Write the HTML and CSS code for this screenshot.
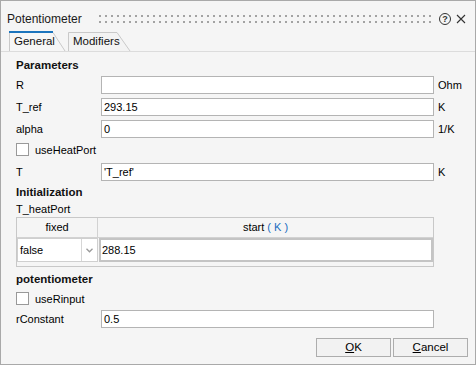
FILE: index.html
```html
<!DOCTYPE html>
<html>
<head>
<meta charset="utf-8">
<link rel="stylesheet" href="styles.css">
</head>
<body>
<div class="window">
  <div class="titlebar">
    <span class="title">Potentiometer</span>
    <span class="grip"></span>
    <span class="help">?</span>
    <svg class="close" width="10" height="10" viewBox="0 0 10 10"><path d="M1 1L9 9M9 1L1 9" stroke="#333" stroke-width="1.1" fill="none"/></svg>
  </div>
  <div class="tabs">
    <div class="tab tab-general">
      <svg class="tab-shape" width="57" height="20" viewBox="0 0 57 20"><path d="M0.5 20V1.5H44L56 20" fill="#f6f6f6" stroke="#c9c9c9"/><rect x="0" y="0" width="44" height="2" fill="#1b74bd"/></svg>
      <span class="tab-label">General</span>
    </div>
    <div class="tab tab-mod">
      <svg class="tab-shape" width="63" height="20" viewBox="0 0 63 20"><path d="M0.5 20V1.5H49L62 20" fill="#f3f3f3" stroke="#c9c9c9"/></svg>
      <span class="tab-label">Modifiers</span>
    </div>
  </div>
  <div class="panel">
    <div class="heading">Parameters</div>
    <div class="row first"><span class="lbl">R</span><div class="field"></div><span class="unit">Ohm</span></div>
    <div class="row"><span class="lbl">T_ref</span><div class="field">293.15</div><span class="unit">K</span></div>
    <div class="row"><span class="lbl">alpha</span><div class="field">0</div><span class="unit">1/K</span></div>
    <div class="check-row"><span class="box"></span><span>useHeatPort</span></div>
    <div class="row after-check"><span class="lbl">T</span><div class="field">'T_ref'</div><span class="unit">K</span></div>
    <div class="heading h2">Initialization</div>
    <div class="sub">T_heatPort</div>
    <div class="table">
      <div class="thead">
        <div class="th th-fixed">fixed</div>
        <div class="th th-start">start <span class="blue">( K )</span></div>
      </div>
      <div class="trow">
        <div class="combo"><span class="combo-text">false</span><span class="combo-arrow"><svg width="7" height="5" viewBox="0 0 7 5"><path d="M0.5 0.8L3.5 3.8L6.5 0.8" stroke="#9a9a9a" stroke-width="1.3" fill="none"/></svg></span></div>
        <div class="cell-input">288.15</div>
      </div>
      <div class="tfoot"></div>
    </div>
    <div class="heading h3">potentiometer</div>
    <div class="check-row c2"><span class="box"></span><span>useRinput</span></div>
    <div class="row r-last"><span class="lbl">rConstant</span><div class="field">0.5</div></div>
  </div>
  <div class="buttons">
    <div class="btn"><u>O</u>K</div>
    <div class="btn"><u>C</u>ancel</div>
  </div>
</div>
</body>
</html>
```
FILE: styles.css
```css
* { box-sizing: border-box; margin: 0; padding: 0; }
html, body { width: 476px; height: 365px; overflow: hidden; }
body {
  background: #f5f5f5;
  font-family: "Liberation Sans", Arial, sans-serif;
  font-size: 11px;
  color: #000;
}
.window {
  width: 476px;
  height: 365px;
  border: 1px solid #a9a9a9;
  background: #f5f5f5;
  display: flex;
  flex-direction: column;
}
.titlebar {
  height: 30px;
  padding: 5px 9px 0 6px;
  display: flex;
  align-items: center;
}
.title { font-size: 12px; color: #1a1a1a; }
.grip {
  flex: 1;
  height: 8px;
  margin: 0 8px 0 17px;
  background-image: conic-gradient(at 2px 2px, transparent 75%, #a3a3a3 0);
  background-size: 6px 6px;
}
.help {
  width: 12px;
  height: 12px;
  border: 1.2px solid #333;
  border-radius: 50%;
  font-size: 9px;
  font-weight: bold;
  line-height: 10px;
  text-align: center;
  color: #333;
}
.close { margin-left: 5px; }
.tabs {
  height: 20px;
  display: flex;
  padding-left: 8px;
}
.tab { position: relative; height: 20px; }
.tab-shape { position: absolute; left: 0; top: 0; }
.tab-label { position: relative; display: block; padding: 4px 0 0 5px; font-size: 11.5px; color: #111; }
.tab-general { width: 57px; }
.tab-mod { width: 63px; margin-left: 2px; }
.panel {
  flex: 1;
  border-top: 1px solid #dcdcdc;
  padding: 4px 0 0 15px;
  display: flex;
  flex-direction: column;
}
.heading { height: 18px; line-height: 18px; font-weight: bold; font-size: 11.5px; color: #111; }
.row { display: flex; align-items: center; height: 18px; margin-top: 4px; }
.row.first { margin-top: 2px; }
.lbl { width: 85px; }
.field {
  width: 333px;
  height: 18px;
  border: 1px solid #b4b4b4;
  background: #fff;
  padding-left: 2px;
  line-height: 16px;
}
.unit { margin-left: 4px; }
.check-row { display: flex; align-items: center; height: 15px; margin-top: 4px; }
.box { width: 13px; height: 13px; border: 1px solid #999; background: #fff; margin-right: 6px; }
.row.after-check { margin-top: 6px; }
.h2 { margin-top: 2px; }
.sub { height: 16px; line-height: 16px; }
.table {
  width: 418px;
  border: 1px solid #c8c8c8;
  display: flex;
  flex-direction: column;
}
.thead { display: flex; height: 20px; border-bottom: 1px solid #d2d2d2; }
.th { line-height: 19px; text-align: center; }
.th-fixed { width: 81px; border-right: 1px solid #d2d2d2; }
.th-start { flex: 1; }
.blue { color: #1a6cc0; }
.trow { display: flex; height: 24px; }
.combo { width: 81px; display: flex; border: 1px solid #cfcfcf; background: #fff; }
.combo-text { flex: 1; padding-left: 2px; line-height: 22px; }
.combo-arrow { width: 16px; border-left: 1px solid #d6d6d6; display: flex; align-items: center; justify-content: center; }
.cell-input { flex: 1; margin-left: 1px; border: 2px solid #c4c4c4; background: #fff; padding-left: 1px; line-height: 20px; }
.tfoot { height: 4px; }
.h3 { margin-top: 3px; }
.check-row.c2 { margin-top: 3px; }
.row.r-last { margin-top: 4px; }
.buttons {
  display: flex;
  justify-content: flex-end;
  gap: 2px;
  padding: 0 7px 7px 0;
}
.btn {
  width: 75px;
  height: 19px;
  border: 1px solid #adadad;
  background: #f2f2f2;
  text-align: center;
  line-height: 17px;
  font-size: 11.5px;
}
```
